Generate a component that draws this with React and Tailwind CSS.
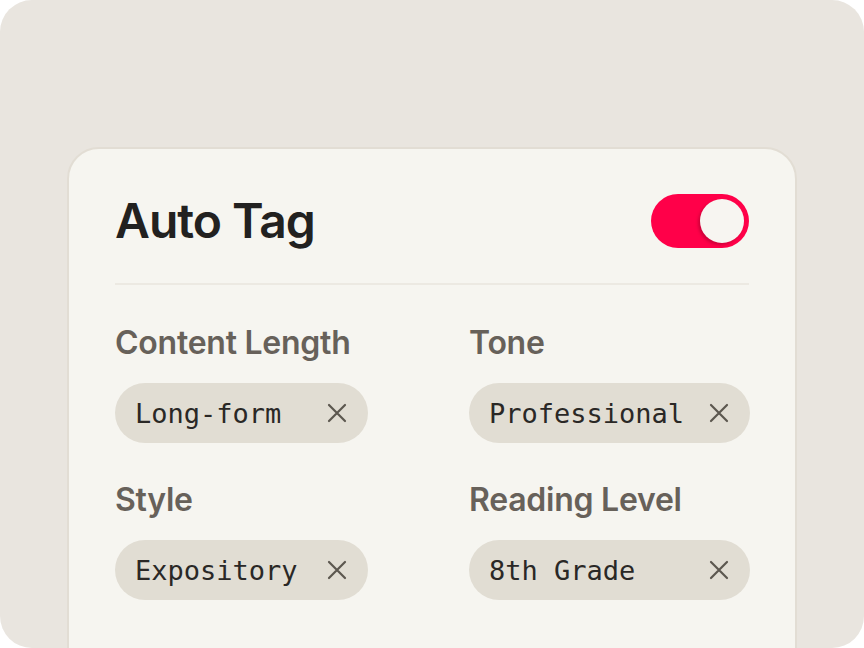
import React from "react";

function XIcon() {
  return (
    <svg width="20" height="20" viewBox="0 0 20 20" fill="none" stroke="#5c574f" strokeWidth="2.2" strokeLinecap="round">
      <path d="M2 2 L18 18 M18 2 L2 18" />
    </svg>
  );
}

function Chip({ text }) {
  return (
    <div className="flex h-[60px] w-full items-center justify-between rounded-full bg-[#e1ddd3] pl-[20px] pr-[21px]">
      <span className="text-[27px] leading-none text-[#2a2826]" style={{ fontFamily: '"DejaVu Sans Mono", "Liberation Mono", monospace' }}>
        {text}
      </span>
      <XIcon />
    </div>
  );
}

function Field({ label, value }) {
  return (
    <div className="flex flex-col">
      <div className="text-[32px] font-semibold leading-[40px] tracking-[-0.25px] text-[#67615a]">{label}</div>
      <div className="mt-[20px]">
        <Chip text={value} />
      </div>
    </div>
  );
}

export default function App() {
  return (
    <div className="h-[648px] w-[864px] bg-white" style={{ fontFamily: 'Inter, "Noto Sans", sans-serif' }}>
      <div className="h-full w-full overflow-hidden rounded-[32px] bg-[#e9e5df] px-[67px] pt-[147px]">
        <div className="h-[560px] rounded-t-[32px] border-2 border-[#e2ddd4] bg-[#f6f5f0] px-[46px] pt-[45px]">
          <div className="flex items-center justify-between">
            <h1 className="text-[48px] font-semibold leading-none tracking-[-1px] text-[#222120]">Auto Tag</h1>
            <div className="flex h-[54px] w-[98px] items-center justify-end rounded-full bg-[#ff0049] pr-[5px]">
              <div className="h-[44px] w-[44px] rounded-full bg-[#f7f5f1] shadow-[-2px_2px_3px_rgba(120,0,30,0.35)]" />
            </div>
          </div>
          <div className="mt-[35px] h-[2px] w-full bg-[#ece9e2]" />
          <div className="mt-[38px] grid grid-cols-[253px_281px] gap-x-[101px] gap-y-[37px]">
            <Field label="Content Length" value="Long-form" />
            <Field label="Tone" value="Professional" />
            <Field label="Style" value="Expository" />
            <Field label="Reading Level" value="8th Grade" />
          </div>
        </div>
      </div>
    </div>
  );
}
